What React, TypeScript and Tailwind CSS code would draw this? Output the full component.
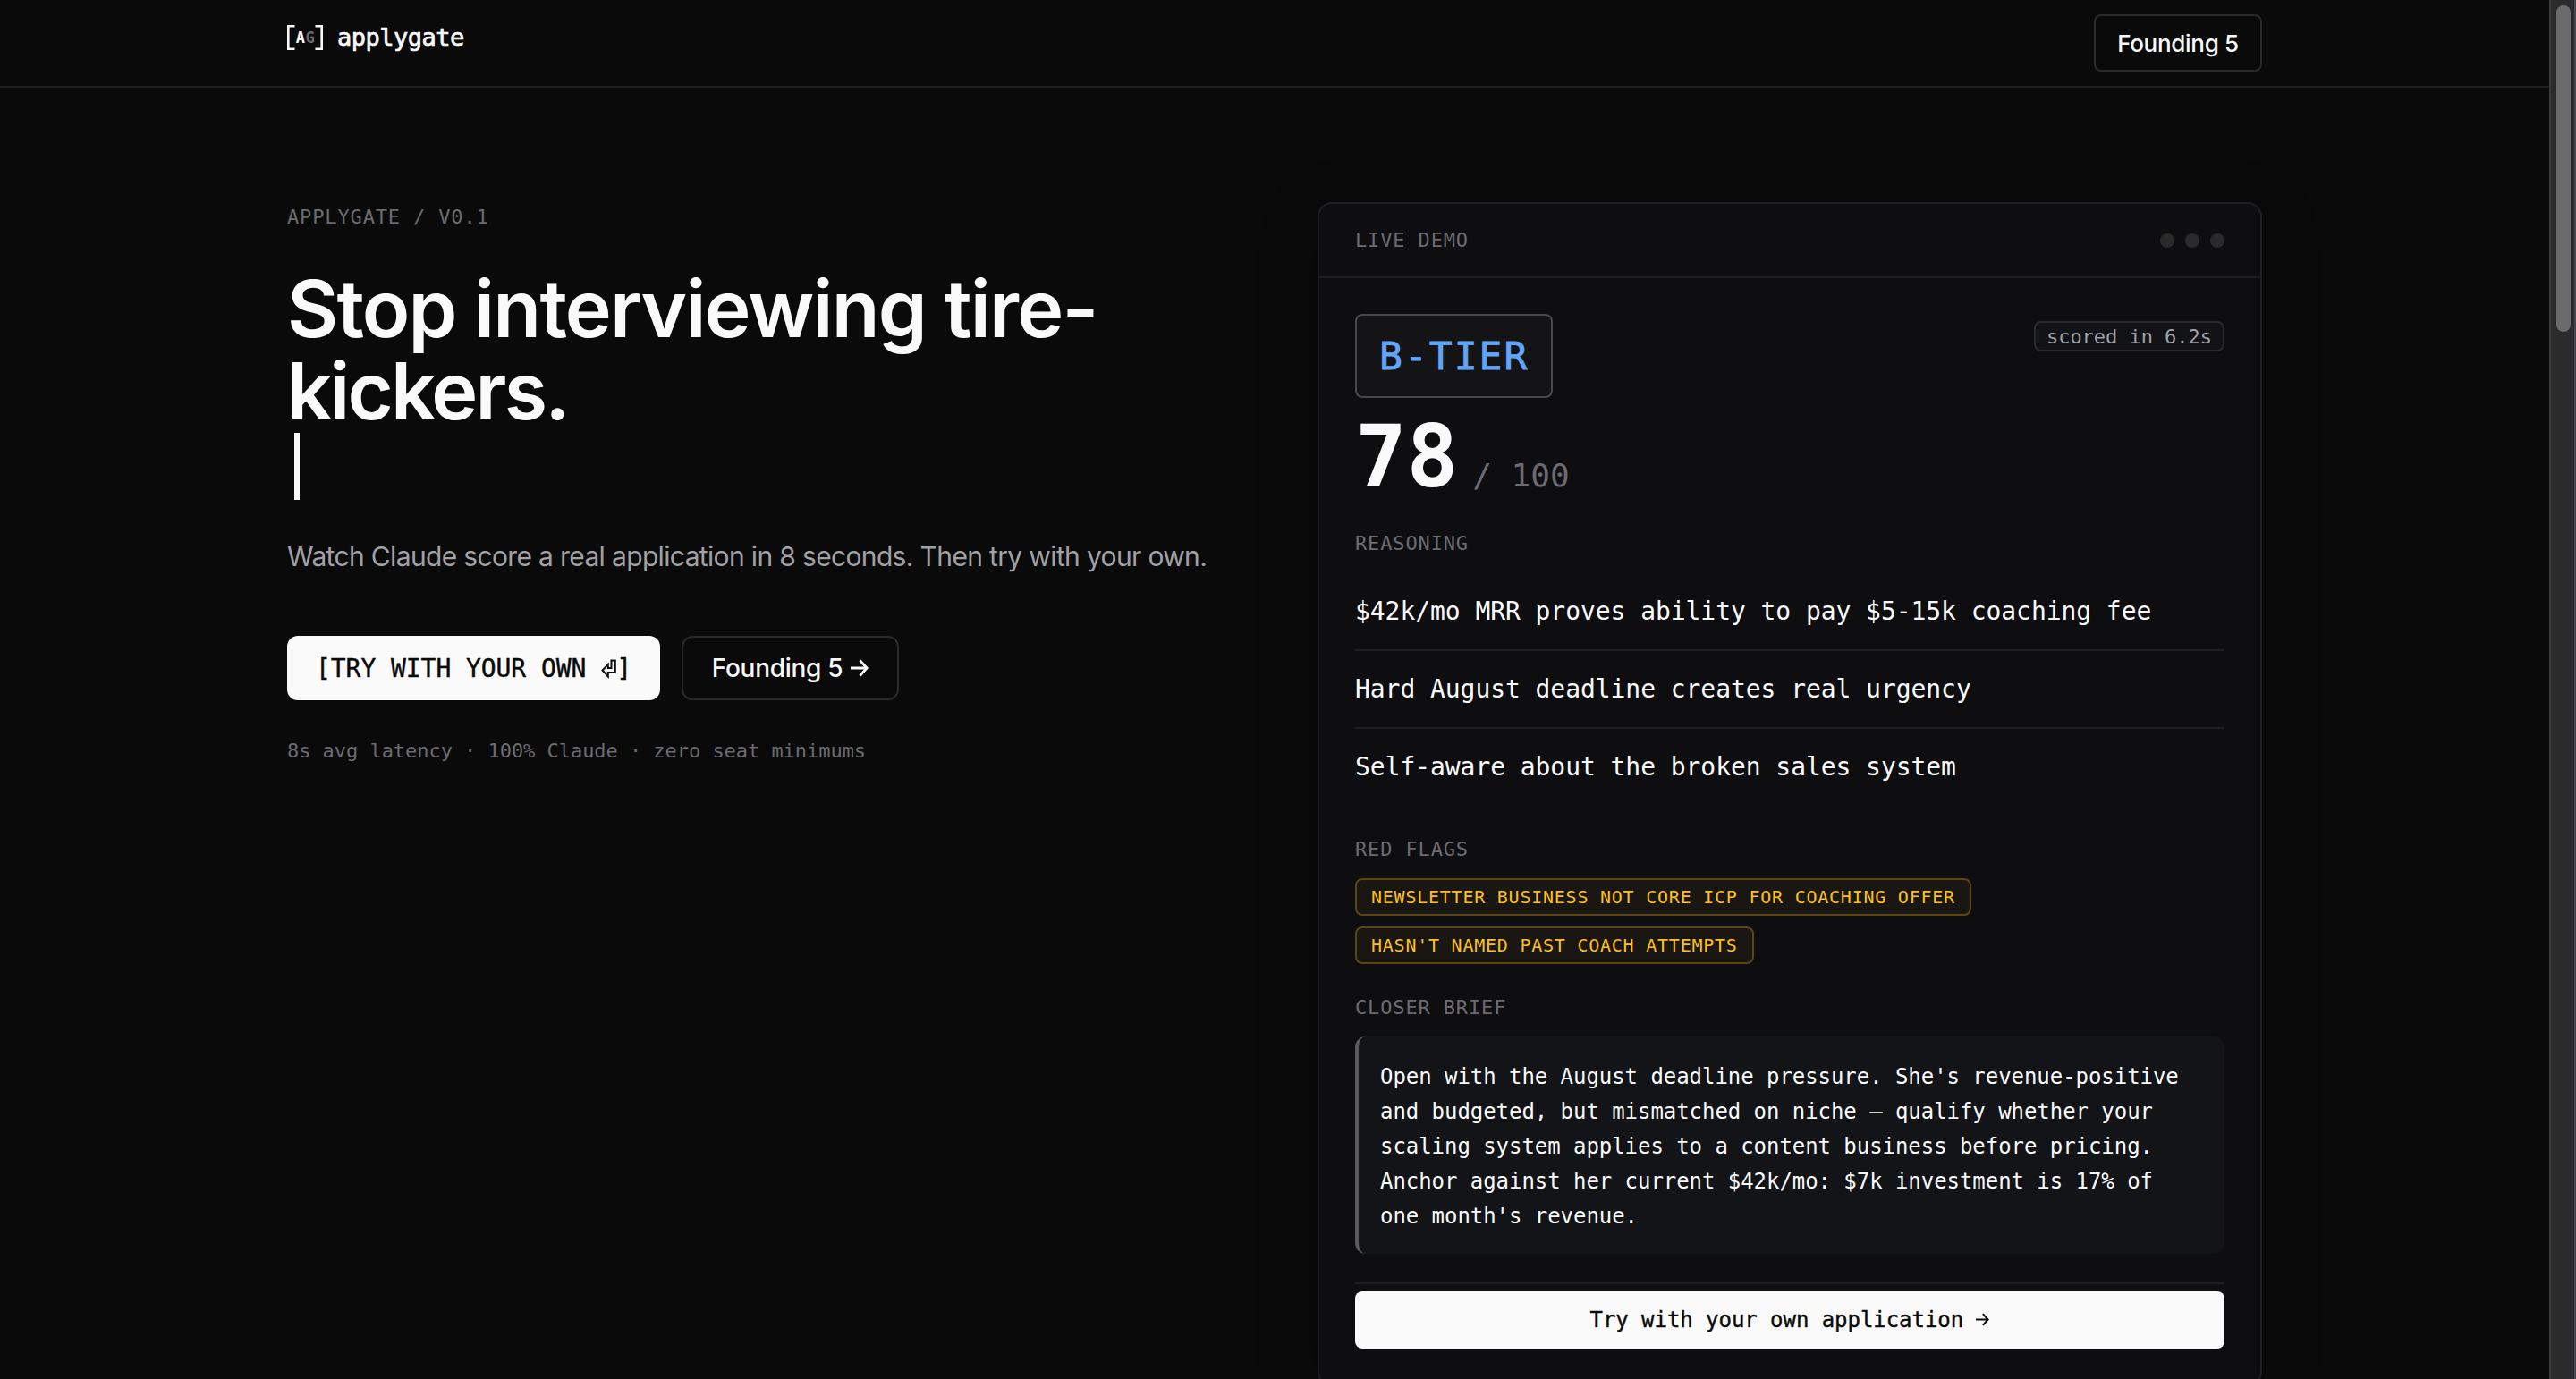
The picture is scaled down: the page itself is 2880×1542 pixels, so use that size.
import { clsx } from 'clsx'
import type { ReactNode } from 'react'

const SANS = "font-['Inter','Liberation_Sans',sans-serif]"
const MONO = "font-['DejaVu_Sans_Mono','Liberation_Mono',monospace]"

const REASONS = [
  '$42k/mo MRR proves ability to pay $5-15k coaching fee',
  'Hard August deadline creates real urgency',
  'Self-aware about the broken sales system',
]

const FLAGS = [
  'NEWSLETTER BUSINESS NOT CORE ICP FOR COACHING OFFER',
  "HASN'T NAMED PAST COACH ATTEMPTS",
]

const BRIEF = [
  "Open with the August deadline pressure. She's revenue-positive",
  'and budgeted, but mismatched on niche — qualify whether your',
  'scaling system applies to a content business before pricing.',
  'Anchor against her current $42k/mo: $7k investment is 17% of',
  "one month's revenue.",
]

function Label({ children }: { children: ReactNode }) {
  return (
    <div className={clsx(MONO, 'text-[22px] leading-[34px] tracking-[0.86px] text-[#6b6b70] whitespace-pre')}>
      {children}
    </div>
  )
}

function Arrow({ className }: { className?: string }) {
  return (
    <svg viewBox="0 0 20 20" fill="none" stroke="currentColor" strokeWidth="2.8" className={className}>
      <path d="M0 10H18M10.5 1.5L18.2 10L10.5 18.5" />
    </svg>
  )
}

function Logo() {
  return (
    <div className="flex items-center gap-4">
      <div className="relative flex h-7 w-10 items-center justify-center">
        <svg viewBox="0 0 40 28" fill="none" stroke="#fafafa" strokeWidth="2.6" className="absolute inset-0">
          <path d="M8.5 1.3H1.3V26.7H8.5M31.5 1.3H38.7V26.7H31.5" />
        </svg>
        <span className={clsx(MONO, 'pt-px pl-px text-[17px] leading-none font-bold tracking-[0.6px] text-[#fafafa]')}>
          A<span className="text-[#6b6b70]">G</span>
        </span>
      </div>
      <span className={clsx(MONO, 'text-[27px] leading-10 tracking-[-0.5px] text-[#fafafa] [-webkit-text-stroke:0.7px]')}>
        applygate
      </span>
    </div>
  )
}

function Nav() {
  return (
    <header className="flex h-[98px] justify-between border-b-2 border-[#1f1f20] px-[321px] pt-4">
      <div className="pt-[6px]">
        <Logo />
      </div>
      <button className="flex h-16 w-[188px] items-center justify-center rounded-lg border-2 border-[#2a2a2a] text-[26px] font-medium tracking-[-0.3px] text-[#fafafa]">
        Founding 5
      </button>
    </header>
  )
}

function Hero() {
  return (
    <section className="w-[1104px]">
      <Label>APPLYGATE / V0.1</Label>
      <h1 className="mt-[39px] text-[88px] leading-[92.4px] font-semibold whitespace-nowrap text-[#fafafa]">
        <span className="block tracking-[-1.8px]">Stop interviewing tire-</span>
        <span className="block tracking-[-2.8px]">kickers.</span>
      </h1>
      <div className="ml-2 h-[75px] w-[6px] bg-[#fafafa]" />
      <p className="mt-[39px] text-[30px] leading-[48px] tracking-[-0.65px] whitespace-nowrap text-[#a1a1a6]">
        Watch Claude score a real application in 8 seconds. Then try with your own.
      </p>
      <div className="mt-[65px] flex gap-6">
        <button
          className={clsx(
            MONO,
            'flex h-[72px] w-[417px] items-center rounded-xl bg-[#fafafa] px-8 pt-[2px] text-[28px] tracking-[-0.06px] whitespace-pre text-[#0a0a0a] [-webkit-text-stroke:0.4px]',
          )}
        >
          {'[TRY WITH YOUR OWN '}
          <svg viewBox="0 0 17 24" fill="none" stroke="currentColor" strokeWidth="2" className="h-6 w-[17px] shrink-0">
            <path d="M11.5 2.5H15.8V16H7.8V20.5L1.5 13.5L7.8 7V11H11.5Z" />
          </svg>
          ]
        </button>
        <button className="flex h-[72px] w-[243px] items-center justify-center gap-[9px] rounded-xl border-2 border-[#2a2a2a] text-[28px] font-medium tracking-[-0.3px] text-[#fafafa]">
          Founding 5
          <Arrow className="h-[20px] w-[20px]" />
        </button>
      </div>
      <p className={clsx(MONO, 'mt-[39px] text-[22px] leading-[36px] tracking-[-0.04px] text-[#6b6b70]')}>
        8s avg latency · 100% Claude · zero seat minimums
      </p>
    </section>
  )
}

function DemoCard() {
  return (
    <section className="h-[1324px] w-[1056px] shrink-0 rounded-2xl border-2 border-[#1f1f21] bg-[#0e0e10] shadow-[0_16px_64px_rgba(0,0,0,0.25)]">
      <div className="flex h-[83px] items-center justify-between border-b-2 border-[#1f1f21] px-10">
        <Label>LIVE DEMO</Label>
        <div className="flex gap-3">
          <span className="size-4 rounded-full bg-[#2a2a2a]" />
          <span className="size-4 rounded-full bg-[#2a2a2a]" />
          <span className="size-4 rounded-full bg-[#2a2a2a]" />
        </div>
      </div>

      <div className={clsx(MONO, 'px-10 pt-10 text-[#fafafa]')}>
        {/* tier badge + latency */}
        <div className="flex items-start justify-between">
          <div className="flex h-[94px] w-[221px] items-center rounded-lg border-2 border-[#48484d] bg-[#141416] pt-px pl-[25px] text-[43px] tracking-[2px] text-[#60a5fa] [-webkit-text-stroke:0.8px]">
            B-TIER
          </div>
          <div className="mt-2 flex h-[34px] w-[213px] items-center rounded-lg border-2 border-[#2a2a2c] bg-[#121317] pl-3 text-[22px] tracking-[-0.04px] whitespace-pre text-[#a1a1a6]">
            scored in 6.2s
          </div>
        </div>

        {/* score */}
        <div className="mt-[18px] flex h-24 items-baseline gap-4">
          <span className="text-[96px] leading-[96px] font-bold tracking-[-0.2px]">78</span>
          <span className="text-[36px] leading-none text-[#6b6b70]">/ 100</span>
        </div>

        <div className="mt-[32px]">
          <Label>REASONING</Label>
        </div>
        <ul className="mt-[16px]">
          {REASONS.map((r) => (
            <li
              key={r}
              className="border-b-2 border-[#1f1f21] pt-[21px] pb-[19px] text-[28px] leading-[44.9px] tracking-[-0.06px] last:border-b-0"
            >
              {r}
            </li>
          ))}
        </ul>

        <div className="mt-[33px]">
          <Label>RED FLAGS</Label>
        </div>
        <div className="mt-[15px] flex flex-col items-start gap-3">
          {FLAGS.map((f) => (
            <span
              key={f}
              className="flex h-[42px] items-center rounded-lg border-2 border-[#5c4514] bg-[#1a1611] px-4 text-[20px] tracking-[0.76px] text-[#fbbf24]"
            >
              {f}
            </span>
          ))}
        </div>

        <div className="mt-[32px]">
          <Label>CLOSER BRIEF</Label>
        </div>
        <div className="mt-[15px] rounded-xl border-l-4 border-[#5a5a5e] bg-[#131418] px-6 pt-[26px] pb-[22px] text-[24px] leading-[39px] tracking-[-0.05px]">
          {BRIEF.map((line) => (
            <div key={line} className="whitespace-nowrap">
              {line}
            </div>
          ))}
        </div>

        <div className="mt-8 border-t-2 border-[#1f1f21] pt-2">
          <button className="flex h-16 w-full items-center justify-center rounded-lg bg-[#fafafa] text-[24px] tracking-[-0.05px] whitespace-pre text-[#0a0a0a] [-webkit-text-stroke:0.4px]">
            {'Try with your own application '}
            <Arrow className="h-[15px] w-[15px]" />
          </button>
        </div>
      </div>
    </section>
  )
}

export default function App() {
  return (
    <div className={clsx(SANS, 'flex h-[1542px] w-[2880px] overflow-hidden bg-[#0a0a0a]')}>
      <div className="w-[2850px]">
        <Nav />
        <main className="flex justify-between px-[321px] pt-32">
          <Hero />
          <DemoCard />
        </main>
      </div>
      {/* scrollbar */}
      <div className="flex w-[30px] items-start border-r-2 border-l-2 border-l-[#3a3a3a] border-r-[#45464e] bg-[#2b2b2b] pt-[6px] pl-[6px]">
        <div className="h-[365px] w-4 rounded-full bg-[#6b6b6b]" />
      </div>
    </div>
  )
}
